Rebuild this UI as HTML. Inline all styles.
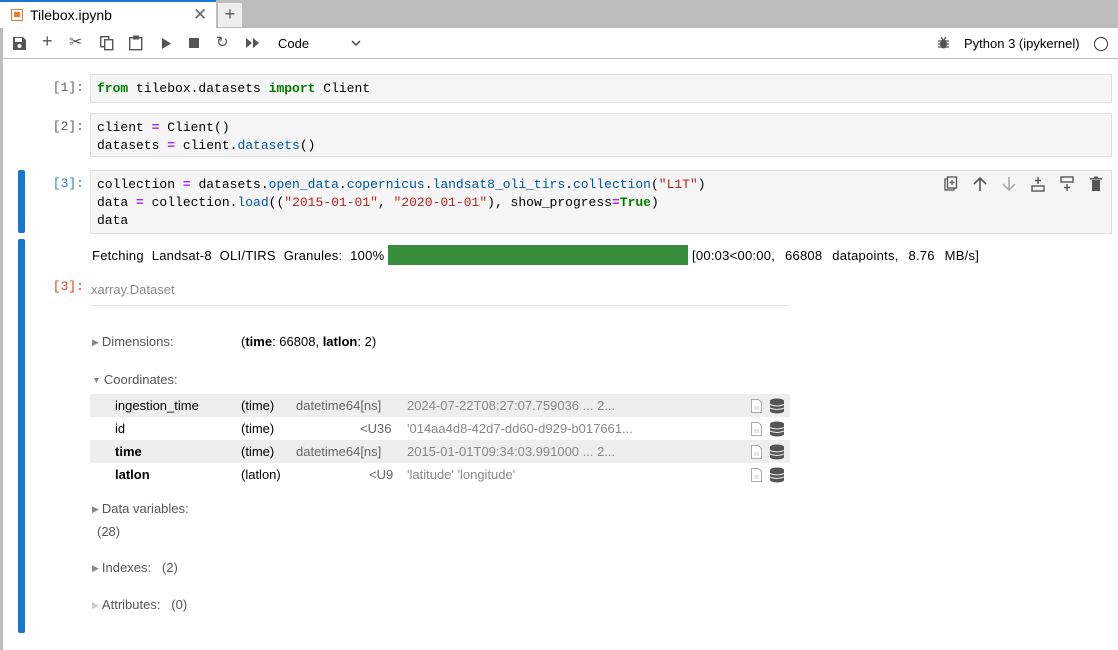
<!DOCTYPE html>
<html><head><meta charset="utf-8">
<style>
*{box-sizing:border-box;margin:0;padding:0}
body{width:1118px;height:650px;overflow:hidden;background:#fff;font-family:"Liberation Sans",sans-serif;font-size:13px;color:#000;position:relative}
.abs{position:absolute}
.tabbar{left:0;top:0;width:1118px;height:28px;background:#bdbdbd}
.tab{left:0;top:0;width:216px;height:29px;background:#fff;border-top:2px solid #1976d2}
.plus{left:218px;top:3px;width:24px;height:24px;background:#eeeeee;text-align:center;font-size:18px;line-height:22px;color:#555}
.toolbar{left:0;top:28px;width:1118px;height:31px;background:#fff;border-bottom:1px solid #bdbdbd}
.leftb{left:0;top:28px;width:3px;height:622px;background:#bdbdbd}
.mono{font-family:"Liberation Mono",monospace;font-size:13px;line-height:18px}
.prompt{font-family:"Liberation Mono",monospace;font-size:13px;color:#616161;text-align:right;width:60px;left:24px}
.ed{left:90px;width:1022px;background:#f5f5f5;border:1px solid #e0e0e0;padding:5px 6px}
.kw{color:#008000;font-weight:bold}
.op{color:#aa22ff;font-weight:bold}
.fn{color:#0055aa}
.st{color:#ba2121}
.bar{left:18px;width:7px;background:#1976d2;border-radius:2px}
.lbl{color:#555;font-size:13px}
.tri{font-size:9px;color:#888;margin-right:3px;position:relative;top:-1px}
.row{left:90px;width:700px;height:23px;line-height:23px;font-size:13px}
.row span{position:absolute}
.g{color:#888}
.ico{position:absolute}
</style></head><body>
<div class="abs tabbar"></div>
<div class="abs tab">
  <svg class="ico" style="left:11px;top:7px" width="12" height="12"><rect x="0.5" y="0.5" width="11" height="11" fill="none" stroke="#f37726"/><rect x="3" y="3" width="6" height="5" fill="#f37726"/></svg>
  <span class="abs" style="left:30px;top:5px;font-size:14px">Tilebox.ipynb</span>
  <span class="abs" style="left:193px;top:3px;font-size:17px;color:#666">✕</span>
</div>
<div class="abs plus">+</div>
<div class="abs toolbar">
  <svg class="ico" style="left:13px;top:9px" width="13" height="13"><path d="M0 0h10l3 3v10H0z" fill="#555"/><rect x="2" y="1" width="7" height="4" fill="#fff"/><circle cx="6.5" cy="9" r="2" fill="#fff"/></svg>
  <span class="abs" style="left:42px;top:3px;font-size:18px;color:#555">+</span>
  <span class="abs" style="left:69px;top:4px;font-size:16px;color:#555">✂</span>
  <svg class="ico" style="left:100px;top:8px" width="14" height="15"><rect x="0.7" y="0.7" width="8" height="10" fill="none" stroke="#555" stroke-width="1.4"/><rect x="4.7" y="3.7" width="8" height="10" fill="#fff" stroke="#555" stroke-width="1.4"/></svg>
  <svg class="ico" style="left:129px;top:7px" width="14" height="16"><rect x="0.7" y="2.7" width="12" height="12" fill="none" stroke="#555" stroke-width="1.4"/><rect x="4" y="0.5" width="6" height="4" fill="#555"/></svg>
  <svg class="ico" style="left:162px;top:10px" width="10" height="11"><path d="M0 0L9 5.5L0 11z" fill="#555"/></svg>
  <div class="abs" style="left:189px;top:10px;width:10px;height:10px;background:#555"></div>
  <span class="abs" style="left:216px;top:5px;font-size:15px;color:#555">↻</span>
  <svg class="ico" style="left:246px;top:10px" width="14" height="10"><path d="M0 0L6 5L0 10zM7 0L13 5L7 10z" fill="#555"/></svg>
  <span class="abs" style="left:278px;top:8px;font-size:13px">Code</span>
  <svg class="ico" style="left:351px;top:12px" width="10" height="7"><path d="M1 1L5 5L9 1" fill="none" stroke="#444" stroke-width="1.5"/></svg>
  <svg class="ico" style="left:938px;top:9px" width="11" height="12"><ellipse cx="5.5" cy="7" rx="3.5" ry="4.5" fill="#555"/><path d="M0 4h11M0 7h11M0 10h11M3 0l2 3M8 0l-2 3" stroke="#555" stroke-width="1.2"/></svg>
  <span class="abs" style="left:964px;top:8px;font-size:13px">Python 3 (ipykernel)</span>
  <div class="abs" style="left:1094px;top:9px;width:14px;height:14px;border:1.3px solid #333;border-radius:50%"></div>
</div>
<div class="abs leftb"></div>

<div class="abs prompt" style="top:80px">[1]:</div>
<div class="abs ed mono" style="top:74px;height:29px"><span class="kw">from</span> tilebox.datasets <span class="kw">import</span> Client</div>

<div class="abs prompt" style="top:119px">[2]:</div>
<div class="abs ed mono" style="top:113px;height:44px;padding-top:5px">client <span class="op">=</span> Client()<br>datasets <span class="op">=</span> client<span>.</span><span class="fn">datasets</span>()</div>

<div class="abs bar" style="top:170px;height:63px"></div>
<div class="abs prompt" style="top:176px;color:#307fc1">[3]:</div>
<div class="abs ed mono" style="top:170px;height:64px;padding-top:5px">collection <span class="op">=</span> datasets.<span class="fn">open_data</span>.<span class="fn">copernicus</span>.<span class="fn">landsat8_oli_tirs</span>.<span class="fn">collection</span>(<span class="st">"L1T"</span>)<br>data <span class="op">=</span> collection.<span class="fn">load</span>((<span class="st">"2015-01-01"</span>, <span class="st">"2020-01-01"</span>), show_progress<span class="op">=</span><span class="kw">True</span>)<br>data</div>
<svg class="ico" style="left:944px;top:176px" width="160" height="16">
<rect x="1" y="3" width="9" height="11" fill="none" stroke="#555" stroke-width="1.3"/><rect x="3.5" y="1" width="9" height="11" fill="#f5f5f5" stroke="#555" stroke-width="1.3"/><path d="M8 4v5M5.5 6.5h5" stroke="#555" stroke-width="1.2"/>
<path d="M36 15V2M30 8l6-6 6 6" fill="none" stroke="#555" stroke-width="1.6"/>
<path d="M65 1v13M59 8l6 6 6-6" fill="none" stroke="#aaa" stroke-width="1.6"/>
<rect x="88" y="10" width="12" height="5" fill="none" stroke="#555" stroke-width="1.4"/><path d="M94 1v7M91 4.5h6" stroke="#555" stroke-width="1.4"/>
<rect x="117" y="1" width="12" height="5" fill="none" stroke="#555" stroke-width="1.4"/><path d="M123 8v7M120 11.5h6" stroke="#555" stroke-width="1.4"/>
<rect x="148" y="4" width="8" height="11" fill="#555"/><rect x="146" y="2" width="12" height="1.5" fill="#555"/><rect x="150" y="0.5" width="4" height="1.5" fill="#555"/>
</svg>

<div class="abs bar" style="top:239px;height:394px"></div>
<div class="abs" style="left:92px;top:248px;font-size:13px;letter-spacing:0.25px;word-spacing:4px;white-space:nowrap">Fetching Landsat-8 OLI/TIRS Granules: 100%</div>
<div class="abs" style="left:388px;top:245px;width:300px;height:20px;background:#388e3c"></div>
<div class="abs" style="left:692px;top:248px;font-size:13px;letter-spacing:0.25px;word-spacing:6px;white-space:nowrap">[00:03&lt;00:00, 66808 datapoints, 8.76 MB/s]</div>

<div class="abs prompt" style="top:279px;color:#d84315">[3]:</div>
<div class="abs" style="left:91px;top:282px;font-size:13px;color:#888">xarray.Dataset</div>
<div class="abs" style="left:90px;top:305px;width:700px;height:1px;background:#e0e0e0"></div>

<div class="abs lbl" style="left:92px;top:334px"><span class="tri">▶</span>Dimensions:</div>
<div class="abs" style="left:241px;top:334px">(<b>time</b>: 66808, <b>latlon</b>: 2)</div>
<div class="abs lbl" style="left:92px;top:372px"><span class="tri">▼</span>Coordinates:</div>

<div class="abs row" style="top:394px;background:#eeeeee"><span style="left:25px">ingestion_time</span><span style="left:151px">(time)</span><span class="g" style="left:206px;color:#666">datetime64[ns]</span><span class="g" style="left:317px">2024-07-22T08:27:07.759036 ... 2...</span></div>
<div class="abs row" style="top:417px"><span style="left:25px">id</span><span style="left:151px">(time)</span><span class="g" style="left:270px;color:#666">&lt;U36</span><span class="g" style="left:317px">'014aa4d8-42d7-dd60-d929-b017661...</span></div>
<div class="abs row" style="top:440px;background:#eeeeee"><span style="left:25px;font-weight:bold">time</span><span style="left:151px">(time)</span><span class="g" style="left:206px;color:#666">datetime64[ns]</span><span class="g" style="left:317px">2015-01-01T09:34:03.991000 ... 2...</span></div>
<div class="abs row" style="top:463px"><span style="left:25px;font-weight:bold">latlon</span><span style="left:151px">(latlon)</span><span class="g" style="left:279px;color:#666">&lt;U9</span><span class="g" style="left:317px">'latitude' 'longitude'</span></div>
<svg class="ico" style="left:750px;top:398px" width="36" height="90">
<g id="r">
<path d="M1.5 1.5h7l3 3v10h-10z" fill="#fff" stroke="#aaa"/><path d="M4 9h5M4 11h5" stroke="#ccc"/>
<ellipse cx="27" cy="3" rx="7" ry="2.5" fill="#555"/><rect x="20" y="3" width="14" height="10" fill="#555"/><ellipse cx="27" cy="13" rx="7" ry="2.5" fill="#555"/><path d="M20 6.5q7 3 14 0M20 10q7 3 14 0" fill="none" stroke="#eee" stroke-width="1"/>
</g>
<use href="#r" y="23"/><use href="#r" y="46"/><use href="#r" y="69"/>
</svg>

<div class="abs lbl" style="left:92px;top:501px"><span class="tri">▶</span>Data variables:</div>
<div class="abs lbl" style="left:97px;top:524px">(28)</div>
<div class="abs lbl" style="left:92px;top:560px"><span class="tri">▶</span>Indexes:&nbsp;&nbsp; (2)</div>
<div class="abs lbl" style="left:92px;top:597px"><span class="tri" style="color:#ccc">▶</span>Attributes:&nbsp;&nbsp; (0)</div>
</body></html>
